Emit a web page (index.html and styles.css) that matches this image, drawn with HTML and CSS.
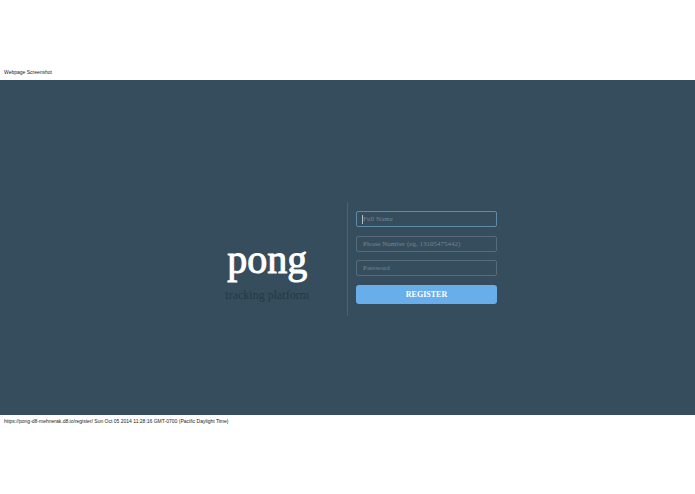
FILE: index.html
```
<!DOCTYPE html>
<html lang="en">
<head>
  <meta charset="UTF-8" />
  <meta name="viewport" content="width=device-width, initial-scale=1.0"/>
  <title>Webpage Screenshot</title>
  <link rel="stylesheet" href="styles.css">
</head>
<body>

  <header class="print-line print-header">Webpage Screenshot</header>

  <!-- Register -->
  <main class="hero">
    <div class="brand">
      <h1>pong</h1>
      <p>tracking platform</p>
    </div>

    <div class="panel">
      <form class="register-form">
        <input type="text" id="fullName" class="active" placeholder="Full Name" aria-label="Full Name" />
        <input type="text" id="phone" placeholder="Phone Number (eg. 13105475442)" aria-label="Phone Number" />
        <input type="password" id="password" placeholder="Password" aria-label="Password" />
        <button type="button" class="btn">REGISTER</button>
      </form>
    </div>
  </main>

  <footer class="print-line print-footer">https://pong-d8-mehnerak.d8.io/register/ Sun Oct 05 2014 11:28:16 GMT-0700 (Pacific Daylight Time)</footer>

</body>
</html>
```

FILE: styles.css
```
:root {
  --background: #354d5d;
  --tagline: #263947;
  --divider: #4b6170;
  --input-border: #576c7a;
  --input-focus: #5e8ba9;
  --placeholder: #758590;
  --primary: #67aeea;
}

* {
  box-sizing: border-box;
}

body {
  margin: 0;
  padding-top: 69px;
  background: #ffffff;
  font-family: "Liberation Serif", serif;
}

.print-line {
  padding: 0 4px;
  font-family: "Liberation Sans", sans-serif;
  font-size: 5px;
  line-height: 7px;
  color: #222222;
}

.print-header {
  padding-bottom: 4px;
}

.print-footer {
  padding-top: 3px;
}

.hero {
  display: grid;
  grid-template-columns: 1fr 1fr;
  padding: 122px 1px 99px 0;
  background: var(--background);
}

.brand {
  justify-self: end;
  padding: 34px 38px 0 0;
  text-align: center;
}

.brand h1 {
  margin: 0;
  font-size: 40px;
  font-weight: normal;
  line-height: 48px;
  color: #ffffff;
  -webkit-text-stroke: 1px #ffffff;
}

.brand p {
  margin: 4px 0 0;
  font-size: 12px;
  line-height: 14px;
  color: var(--tagline);
}

.panel {
  padding: 9px 9px 12px 8px;
  border-left: 1px solid var(--divider);
}

.register-form {
  display: flex;
  flex-direction: column;
  justify-content: space-between;
  max-width: 141px;
  height: 93px;
}

.register-form input {
  width: 100%;
  height: 16px;
  padding: 0 6px;
  font-family: inherit;
  font-size: 7px;
  color: #ffffff;
  background: transparent;
  border: 1px solid var(--input-border);
  border-radius: 2px;
  outline: none;
}

.register-form input::placeholder {
  color: var(--placeholder);
  opacity: 1;
}

.register-form input.active {
  border-color: var(--input-focus);
  /* text caret */
  background: linear-gradient(#b5bfc5, #b5bfc5) 5px center / 1px 9px no-repeat;
}

.btn {
  width: 100%;
  height: 19px;
  padding: 0;
  font-family: inherit;
  font-size: 8px;
  font-weight: bold;
  color: #ffffff;
  background: var(--primary);
  border: none;
  border-radius: 3px;
  cursor: pointer;
}
```
